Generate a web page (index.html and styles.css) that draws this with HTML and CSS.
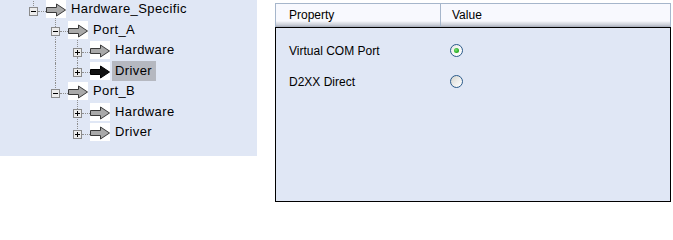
FILE: index.html
```html
<!DOCTYPE html>
<html>
<head>
<meta charset="utf-8">
<link rel="stylesheet" href="styles.css">
</head>
<body>
<div class="page">
  <div class="tree">
    <div class="row">
      <span class="n"><svg class="exp" viewBox="0 0 9 9"><rect x="0.5" y="0.5" width="8" height="8" class="eb"/><path d="M2 4.5H7" class="em"/></svg></span><span class="hl"></span><svg class="ico" viewBox="0 0 20 18"><rect width="20" height="18" fill="#fff"/><path class="ar" d="M0.5 7.5H10.5V4L19.5 10L10.5 16V12.5H0.5Z"/></svg><span class="lbl">Hardware_Specific</span>
    </div>
    <div class="row">
      <span class="g"></span><span class="n first dn"><svg class="exp" viewBox="0 0 9 9"><rect x="0.5" y="0.5" width="8" height="8" class="eb"/><path d="M2 4.5H7" class="em"/></svg></span><span class="hl"></span><svg class="ico" viewBox="0 0 20 18"><rect width="20" height="18" fill="#fff"/><path class="ar" d="M0.5 7.5H10.5V4L19.5 10L10.5 16V12.5H0.5Z"/></svg><span class="lbl">Port_A</span>
    </div>
    <div class="row">
      <span class="g"></span><span class="g v"></span><span class="n first dn"><svg class="exp" viewBox="0 0 9 9"><rect x="0.5" y="0.5" width="8" height="8" class="eb"/><path d="M2 4.5H7M4.5 2V7" class="em"/></svg></span><span class="hl"></span><svg class="ico" viewBox="0 0 20 18"><rect width="20" height="18" fill="#fff"/><path class="ar" d="M0.5 7.5H10.5V4L19.5 10L10.5 16V12.5H0.5Z"/></svg><span class="lbl">Hardware</span>
    </div>
    <div class="row">
      <span class="g"></span><span class="g v"></span><span class="n"><svg class="exp" viewBox="0 0 9 9"><rect x="0.5" y="0.5" width="8" height="8" class="eb"/><path d="M2 4.5H7M4.5 2V7" class="em"/></svg></span><span class="hl"></span><svg class="ico" viewBox="0 0 20 18"><rect width="20" height="18" fill="#fff"/><path class="ar sel" d="M0.5 7.5H10.5V4L19.5 10L10.5 16V12.5H0.5Z"/></svg><span class="lbl selected">Driver</span>
    </div>
    <div class="row">
      <span class="g"></span><span class="n"><svg class="exp" viewBox="0 0 9 9"><rect x="0.5" y="0.5" width="8" height="8" class="eb"/><path d="M2 4.5H7" class="em"/></svg></span><span class="hl"></span><svg class="ico" viewBox="0 0 20 18"><rect width="20" height="18" fill="#fff"/><path class="ar" d="M0.5 7.5H10.5V4L19.5 10L10.5 16V12.5H0.5Z"/></svg><span class="lbl">Port_B</span>
    </div>
    <div class="row">
      <span class="g"></span><span class="g"></span><span class="n first dn"><svg class="exp" viewBox="0 0 9 9"><rect x="0.5" y="0.5" width="8" height="8" class="eb"/><path d="M2 4.5H7M4.5 2V7" class="em"/></svg></span><span class="hl"></span><svg class="ico" viewBox="0 0 20 18"><rect width="20" height="18" fill="#fff"/><path class="ar" d="M0.5 7.5H10.5V4L19.5 10L10.5 16V12.5H0.5Z"/></svg><span class="lbl">Hardware</span>
    </div>
    <div class="row">
      <span class="g"></span><span class="g"></span><span class="n"><svg class="exp" viewBox="0 0 9 9"><rect x="0.5" y="0.5" width="8" height="8" class="eb"/><path d="M2 4.5H7M4.5 2V7" class="em"/></svg></span><span class="hl"></span><svg class="ico" viewBox="0 0 20 18"><rect width="20" height="18" fill="#fff"/><path class="ar" d="M0.5 7.5H10.5V4L19.5 10L10.5 16V12.5H0.5Z"/></svg><span class="lbl">Driver</span>
    </div>
  </div>

  <div class="grid">
    <div class="ghead">
      <div class="hc c1">Property</div>
      <div class="hc c2">Value</div>
    </div>
    <div class="gbody">
      <div class="gr">
        <div class="gl">Virtual COM Port</div>
        <div class="gv"><span class="radio on"></span></div>
      </div>
      <div class="gr">
        <div class="gl">D2XX Direct</div>
        <div class="gv"><span class="radio"></span></div>
      </div>
    </div>
  </div>
</div>
</body>
</html>
```

FILE: styles.css
```css
html, body {
  margin: 0;
  padding: 0;
  background: #fff;
}

.page {
  display: flex;
  align-items: flex-start;
  gap: 18px;
  width: 673px;
  height: 203px;
  overflow: hidden;
}

/* ---------- tree ---------- */
.tree {
  width: 257px;
  height: 156px;
  box-sizing: border-box;
  background: #e0e7f5;
  padding: 1px 0 0 29px;
  font-family: "Liberation Sans", Arial, sans-serif;
  font-size: 13px;
  letter-spacing: 0.4px;
  color: #000;
}

.row {
  display: flex;
  align-items: center;
  height: 20.5px;
}

.g {
  width: 22px;
  align-self: stretch;
  flex: none;
  position: relative;
}

.g.v::before {
  content: "";
  position: absolute;
  left: 4px;
  top: 0;
  bottom: 0;
  border-left: 1px dotted #8e8e8e;
}

.n {
  width: 9px;
  flex: none;
  align-self: stretch;
  display: flex;
  align-items: center;
  position: relative;
}

.n::before {
  content: "";
  position: absolute;
  left: 4px;
  top: 0;
  height: calc(50% - 5px);
  border-left: 1px dotted #8e8e8e;
}

.n.first::before {
  top: -10px;
  height: calc(50% + 5px);
}

.n.dn::after {
  content: "";
  position: absolute;
  left: 4px;
  top: calc(50% + 5px);
  bottom: 0;
  border-left: 1px dotted #8e8e8e;
}

.exp {
  width: 9px;
  height: 9px;
  display: block;
  position: relative;
  z-index: 2;
}

.eb {
  fill: #ececec;
  stroke: #8a8a8a;
  stroke-width: 1;
}

.em {
  stroke: #000;
  stroke-width: 1;
  fill: none;
}

.hl {
  width: 8px;
  flex: none;
  border-top: 1px dotted #8e8e8e;
  height: 0;
}

.ico {
  width: 20px;
  height: 18px;
  flex: none;
  display: block;
  margin-bottom: 4px;
  position: relative;
  z-index: 1;
}

.ar {
  fill: #a9a9a9;
  stroke: #3a3a3a;
  stroke-width: 1;
  stroke-linejoin: miter;
}

.ar.sel {
  fill: #111;
  stroke: #000;
}

.lbl {
  margin-left: 2px;
  padding: 0 4px 0 3px;
  height: 20px;
  line-height: 20px;
  margin-bottom: 4px;
  white-space: nowrap;
}

.lbl.selected {
  background: #b5b8c0;
}

/* ---------- property grid ---------- */
.grid {
  width: 396px;
  height: 199px;
  margin-top: 3px;
  display: flex;
  flex-direction: column;
  font-family: "Liberation Sans", Arial, sans-serif;
  font-size: 12px;
  color: #000;
}

.ghead {
  height: 24px;
  flex: none;
  box-sizing: border-box;
  border: 1px solid #a6b6cb;
  border-bottom: 0;
  display: flex;
  background: linear-gradient(to bottom, #f8f9fe 0, #f8f9fe 74%, #e6e8ee 80%, #cdd1da 90%, #a4aab8 100%);
}

.hc {
  display: flex;
  align-items: center;
  padding-bottom: 1px;
  box-sizing: border-box;
}

.c1 {
  width: 165px;
  padding-left: 13px;
  border-right: 1px solid #a6b6cb;
}

.c2 {
  flex: 1;
  padding-left: 11px;
}

.gbody {
  flex: 1;
  border: 1px solid #000;
  background: #e0e7f5;
  padding-top: 7px;
}

.gr {
  display: grid;
  grid-template-columns: 165px 1fr;
  height: 31px;
  align-items: center;
}

.gl {
  padding-left: 13px;
}

.gv {
  padding-left: 9px;
  display: flex;
  align-items: center;
}

.radio {
  width: 13px;
  height: 13px;
  box-sizing: border-box;
  border-radius: 50%;
  border: 1px solid #2a5a8a;
  background: linear-gradient(135deg, #d4d4cc 0%, #ececea 50%, #ffffff 100%);
  display: flex;
  align-items: center;
  justify-content: center;
}

.radio.on {
  background: linear-gradient(135deg, #e8e8e4 0%, #f6f6f4 50%, #ffffff 100%);
}

.radio.on::before {
  content: "";
  width: 5px;
  height: 5px;
  border-radius: 50%;
  background: radial-gradient(circle at 40% 40%, #7de07a 0%, #2eb52a 55%, #1a8a18 100%);
}
```
